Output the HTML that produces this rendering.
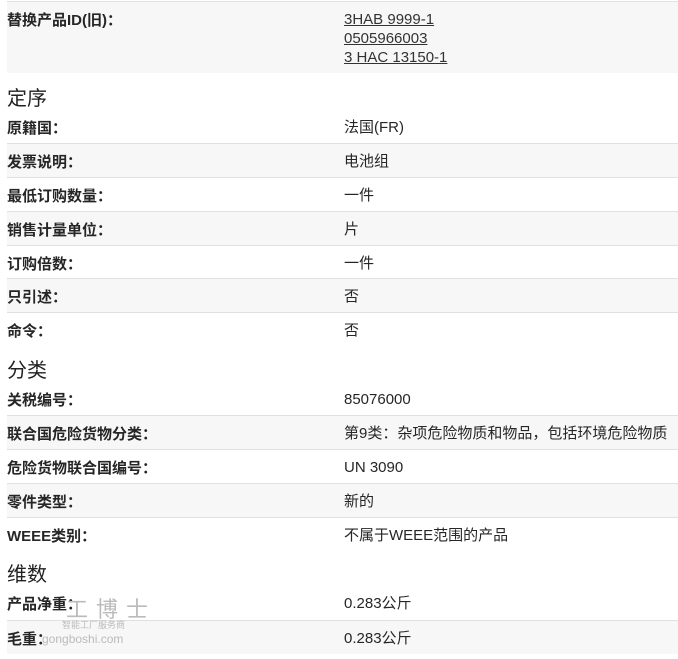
<!DOCTYPE html>
<html><head><meta charset="utf-8"><style>
body{margin:0;background:#fff;font-family:"Liberation Sans","Noto Sans CJK SC",sans-serif;color:#262626;font-size:15px;width:678px;height:659px;overflow:hidden;position:relative}
.r{position:absolute;left:7px;width:671px;border-top:1px solid #e0e0e0;box-sizing:border-box}
.g{background:#f7f7f7}
.l{position:absolute;left:0;top:9px;font-weight:bold;line-height:19px}
.v{position:absolute;left:337px;top:8px;line-height:19px}
.v a{color:#333;text-decoration:underline}
.h{position:absolute;left:7px;font-size:20px;color:#222}
</style></head><body>
<div class="r g" style="top:1px;height:72px"><span class="l">替换产品ID(旧)：</span><span class="v"><a>3HAB 9999-1</a><br><a>0505966003</a><br><a>3 HAC 13150-1</a></span></div>
<div class="h" style="top:82px">定序</div>
<div class="r" style="top:110px;height:34px;border-top:none"><span class="l">原籍国：</span><span class="v">法国(FR)</span></div>
<div class="r g" style="top:143px;height:34px"><span class="l">发票说明：</span><span class="v">电池组</span></div>
<div class="r" style="top:177px;height:34px"><span class="l">最低订购数量：</span><span class="v">一件</span></div>
<div class="r g" style="top:211px;height:34px"><span class="l">销售计量单位：</span><span class="v">片</span></div>
<div class="r" style="top:245px;height:34px"><span class="l">订购倍数：</span><span class="v">一件</span></div>
<div class="r g" style="top:278px;height:34px"><span class="l">只引述：</span><span class="v">否</span></div>
<div class="r" style="top:312px;height:34px"><span class="l">命令：</span><span class="v">否</span></div>
<div class="h" style="top:354px">分类</div>
<div class="r" style="top:382px;height:34px;border-top:none"><span class="l">关税编号：</span><span class="v">85076000</span></div>
<div class="r g" style="top:415px;height:34px"><span class="l">联合国危险货物分类：</span><span class="v">第9类：杂项危险物质和物品，包括环境危险物质</span></div>
<div class="r" style="top:449px;height:34px"><span class="l">危险货物联合国编号：</span><span class="v">UN 3090</span></div>
<div class="r g" style="top:483px;height:34px"><span class="l">零件类型：</span><span class="v">新的</span></div>
<div class="r" style="top:517px;height:34px"><span class="l">WEEE类别：</span><span class="v">不属于WEEE范围的产品</span></div>
<div class="h" style="top:558px">维数</div>
<div class="r" style="top:586px;height:34px;border-top:none"><span class="l">产品净重：</span><span class="v">0.283公斤</span></div>
<div class="r g" style="top:620px;height:34px"><span class="l">毛重：</span><span class="v">0.283公斤</span></div>
<div style="position:absolute;left:66px;top:592px;font-size:22px;color:#bbb;letter-spacing:8px">工博士</div>
<div style="position:absolute;left:62px;top:618px;font-size:9px;color:#bbb">智能工厂服务商</div>
<div style="position:absolute;left:42px;top:632px;font-size:12px;color:#bbb">gongboshi.com</div>
</body></html>
